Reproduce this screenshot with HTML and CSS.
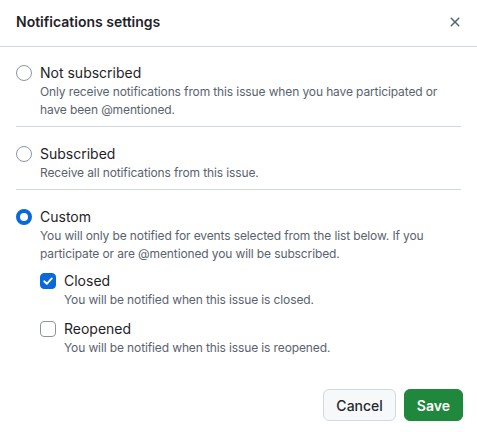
FILE: index.html
```html
<!DOCTYPE html>
<html lang="en">
<head>
<meta charset="utf-8">
<title>Notifications settings</title>
<link rel="stylesheet" href="styles.css">
</head>
<body>
<div class="dialog">
  <header class="dialog-header">
    <h1 class="dialog-title">Notifications settings</h1>
    <button class="close-btn" aria-label="Close">
      <svg width="16" height="16" viewBox="0 0 16 16" fill="currentColor"><path d="M3.72 3.72a.75.75 0 0 1 1.06 0L8 6.94l3.22-3.220a.749.749 0 0 1 1.275.326.749.749 0 0 1-.215.734L9.06 8l3.22 3.22a.749.749 0 0 1-.326 1.275.749.749 0 0 1-.734-.215L8 9.06l-3.22 3.22a.751.751 0 0 1-1.042-.018.751.751 0 0 1-.018-1.042L6.94 8 3.72 4.78a.75.75 0 0 1 0-1.06Z"/></svg>
    </button>
  </header>
  <div class="dialog-body">
    <div class="option">
      <span class="radio"></span>
      <div class="option-text">
        <div class="label">Not subscribed</div>
        <div class="desc">Only receive notifications from this issue when you have participated or have been @mentioned.</div>
      </div>
    </div>
    <div class="divider"></div>
    <div class="option">
      <span class="radio"></span>
      <div class="option-text">
        <div class="label">Subscribed</div>
        <div class="desc">Receive all notifications from this issue.</div>
      </div>
    </div>
    <div class="divider"></div>
    <div class="option">
      <span class="radio checked"></span>
      <div class="option-text">
        <div class="label">Custom</div>
        <div class="desc">You will only be notified for events selected from the list below. If you participate or are @mentioned you will be subscribed.</div>
        <div class="events">
          <div class="option">
            <span class="checkbox checked">
              <svg width="12" height="12" viewBox="0 0 12 12" fill="none"><path d="M2.2 6.3 4.8 8.8 9.8 3.4" stroke="#fff" stroke-width="1.9" stroke-linecap="round" stroke-linejoin="round"/></svg>
            </span>
            <div class="option-text">
              <div class="label">Closed</div>
              <div class="desc">You will be notified when this issue is closed.</div>
            </div>
          </div>
          <div class="option">
            <span class="checkbox"></span>
            <div class="option-text">
              <div class="label">Reopened</div>
              <div class="desc">You will be notified when this issue is reopened.</div>
            </div>
          </div>
        </div>
      </div>
    </div>
  </div>
  <footer class="dialog-footer">
    <button class="btn">Cancel</button>
    <button class="btn btn-primary">Save</button>
  </footer>
</div>
</body>
</html>
```
FILE: styles.css
```css
* { box-sizing: border-box; }
html, body { margin: 0; padding: 0; background: #ffffff; }
body {
  font-family: Inter, "Liberation Sans", Arial, sans-serif;
  color: #1f2328;
}
.dialog { width: 477px; background: #fff; }
.dialog-header {
  height: 47px;
  display: flex;
  align-items: center;
  justify-content: space-between;
  padding: 0 6px 3px 16px;
  border-bottom: 1px solid #d1d9e0;
}
.dialog-title {
  margin: 0;
  font-size: 14px;
  line-height: 20px;
  font-weight: 600;
}
.close-btn {
  width: 32px;
  height: 32px;
  border: 0;
  background: transparent;
  color: #59636e;
  display: flex;
  align-items: center;
  justify-content: center;
  padding: 0;
}
.dialog-body { padding: 16px 16px 16px 16px; }
.option { display: flex; align-items: flex-start; gap: 8px; }
.option-text { flex: 1; min-width: 0; }
.label { font-size: 14px; line-height: 20px; }
.desc { font-size: 12px; line-height: 18px; color: #59636e; letter-spacing: -0.12px; }
.divider { height: 1px; background: #d1d9e0; margin: 7px 0 17px; }
.radio {
  flex: none;
  width: 16px;
  height: 16px;
  margin-top: 2px;
  border-radius: 50%;
  border: 1px solid #8c959f;
  background: #fff;
}
.radio.checked { border: 4px solid #0969da; }
.checkbox {
  flex: none;
  width: 16px;
  height: 16px;
  margin-top: 2px;
  border-radius: 4px;
  border: 1px solid #8c959f;
  background: #fff;
  display: flex;
  align-items: center;
  justify-content: center;
}
.checkbox.checked { background: #0969da; border-color: #0969da; }
.events { display: flex; flex-direction: column; gap: 10px; padding-top: 8px; }
.dialog-footer {
  display: flex;
  justify-content: flex-end;
  gap: 8px;
  padding: 16px 14px 16px 16px;
}
.btn {
  height: 32px;
  padding: 0 12px;
  font-family: inherit;
  font-size: 14px;
  font-weight: 500;
  color: #25292e;
  background: #f6f8fa;
  border: 1px solid #d1d9e0;
  border-radius: 6px;
}
.btn-primary {
  background: #1f883d;
  border-color: #1f883d;
  color: #fff;
  font-weight: 600;
}
```
